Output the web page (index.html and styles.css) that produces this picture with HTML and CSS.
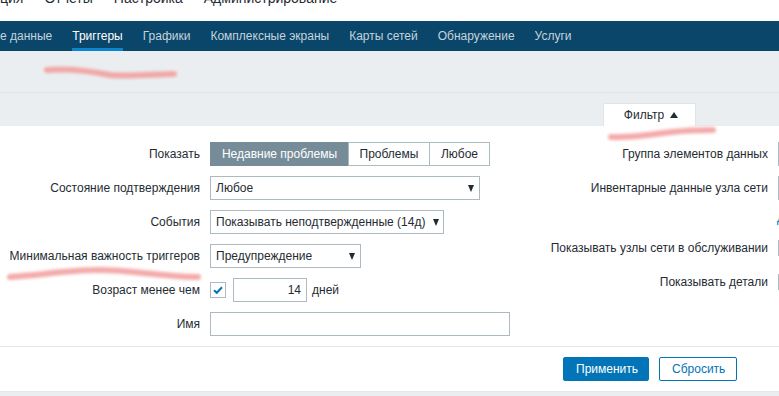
FILE: index.html
```html
<!DOCTYPE html>
<html lang="ru">
<head>
<meta charset="utf-8">
<title>Триггеры</title>
<link rel="stylesheet" href="styles.css">
</head>
<body>
<div class="page">
  <header class="top-menu">
    <ul class="top-menu-list">
      <li>ция</li>
      <li>Отчеты</li>
      <li>Настройка</li>
      <li>Администрирование</li>
    </ul>
  </header>

  <nav class="sub-nav">
    <a class="sub-nav-item">е данные</a>
    <a class="sub-nav-item active">Триггеры</a>
    <a class="sub-nav-item">Графики</a>
    <a class="sub-nav-item">Комплексные экраны</a>
    <a class="sub-nav-item">Карты сетей</a>
    <a class="sub-nav-item">Обнаружение</a>
    <a class="sub-nav-item">Услуги</a>
  </nav>

  <div class="header-area"></div>

  <div class="filter-tabs">
    <div class="filter-tab">Фильтр <span class="tri-up"></span></div>
  </div>

  <div class="filter-body">
    <div class="col-left">
      <label class="form-label">Показать</label>
      <div class="radio-group">
        <span class="radio-btn selected w-recent">Недавние проблемы</span>
        <span class="radio-btn w-problems">Проблемы</span>
        <span class="radio-btn w-any">Любое</span>
      </div>

      <label class="form-label">Состояние подтверждения</label>
      <div class="select w-ack">Любое<span class="tri-down"></span></div>

      <label class="form-label">События</label>
      <div class="select w-events">Показывать неподтвержденные (14д)<span class="tri-down"></span></div>

      <label class="form-label">Минимальная важность триггеров</label>
      <div class="select w-sev">Предупреждение<span class="tri-down"></span></div>

      <label class="form-label">Возраст менее чем</label>
      <div class="age-field">
        <span class="checkbox checked">
          <svg class="check" viewBox="0 0 12 12" width="12" height="12"><path d="M2 6.2 L4.8 8.8 L10 3.2" fill="none" stroke="#0275b8" stroke-width="2"/></svg>
        </span>
        <span class="text-input w-age">14</span>
        <span class="unit">дней</span>
      </div>

      <label class="form-label">Имя</label>
      <span class="text-input w-name"></span>
    </div>

    <div class="col-right">
      <div class="r-row r1">
        <label class="form-label">Группа элементов данных</label>
        <span class="multiselect"></span>
      </div>
      <div class="r-row r2">
        <label class="form-label">Инвентарные данные узла сети</label>
        <span class="multiselect"></span>
      </div>
      <div class="r-row r3">
        <span></span>
        <a class="link">Добавить</a>
      </div>
      <div class="r-row r4">
        <label class="form-label">Показывать узлы сети в обслуживании</label>
        <span class="checkbox"></span>
      </div>
      <div class="r-row r5">
        <label class="form-label">Показывать детали</label>
        <span class="checkbox"></span>
      </div>
    </div>
  </div>

  <div class="filter-footer">
    <button class="btn btn-primary" type="button">Применить</button>
    <button class="btn btn-alt" type="button">Сбросить</button>
  </div>

  <div class="bottom-band"></div>

  <svg class="scribbles" width="779" height="396" viewBox="0 0 779 396">
    <defs>
      <filter id="soft" x="-10%" y="-300%" width="120%" height="700%">
        <feGaussianBlur stdDeviation="1.6"/>
      </filter>
    </defs>
    <g fill="none" stroke="#f29b9b" stroke-width="6" stroke-linecap="round" opacity="0.85" filter="url(#soft)">
      <path d="M47 70 C 70 68, 90 71, 110 75 C 130 77, 155 74, 174 74"/>
      <path d="M611 137 C 630 138, 650 135, 672 132 C 690 130, 700 130, 713 130"/>
      <path d="M10 277 C 40 275, 70 270, 95 270 C 130 269, 150 276, 198 277"/>
    </g>
  </svg>
</div>
</body>
</html>
```

FILE: styles.css
```css
html, body {
  margin: 0;
  padding: 0;
  overflow: hidden;
}

body {
  font-family: "Liberation Sans", Arial, sans-serif;
  font-size: 12px;
  color: #1f2c33;
  background: #ffffff;
}

.page {
  position: relative;
  width: 779px;
  height: 396px;
  overflow: hidden;
}

/* top main menu (cropped) */
.top-menu {
  height: 21px;
  overflow: hidden;
  background: #ffffff;
}

.top-menu-list {
  list-style: none;
  margin: -10px 0 0 0;
  padding: 0;
  display: flex;
  gap: 21px;
  font-size: 14px;
  line-height: 16px;
  color: #1f2c33;
  white-space: nowrap;
}

/* secondary nav */
.sub-nav {
  height: 30px;
  background: #0a466a;
  display: flex;
  gap: 20px;
  white-space: nowrap;
}

.sub-nav-item {
  display: block;
  line-height: 30px;
  height: 30px;
  box-sizing: border-box;
  color: #c4d3dd;
  font-size: 12px;
}

.sub-nav-item.active {
  color: #ffffff;
  box-shadow: inset 0 -3px 0 #0a85d0;
}

/* page header area */
.header-area {
  height: 41px;
  background: #ebeef0;
  border-bottom: 1px solid #dfe4e7;
}

.filter-tabs {
  height: 33px;
  box-sizing: border-box;
  background: #ebeef0;
  padding: 10px 0 0 603px;
}

.filter-tab {
  width: 93px;
  height: 23px;
  box-sizing: border-box;
  background: #ffffff;
  border: 1px solid #e1e5e8;
  border-bottom: none;
  display: flex;
  align-items: center;
  justify-content: center;
  gap: 6px;
  color: #1f2c33;
  padding-left: 3px;
}

.tri-up {
  display: inline-block;
  width: 0;
  height: 0;
  border-left: 4px solid transparent;
  border-right: 4px solid transparent;
  border-bottom: 6px solid #1f2c33;
}

/* filter body */
.filter-body {
  display: flex;
  height: 220px;
  box-sizing: border-box;
  padding-top: 16px;
  background: #ffffff;
}

.col-left {
  flex: 0 0 540px;
  display: grid;
  grid-template-columns: 200px auto;
  grid-auto-rows: 24px;
  column-gap: 10px;
  row-gap: 10px;
  align-items: center;
  align-content: start;
}

.form-label {
  justify-self: end;
  text-align: right;
  white-space: nowrap;
  color: #1f2c33;
}

.col-left > :not(.form-label) {
  justify-self: start;
}

.radio-group {
  display: flex;
  height: 24px;
}

.radio-btn {
  box-sizing: border-box;
  height: 24px;
  line-height: 22px;
  padding: 0;
  text-align: center;
  border: 1px solid #acbbc2;
  background: #ffffff;
  color: #1f2c33;
  white-space: nowrap;
}

.w-recent { width: 139px; }
.w-problems { width: 82px; }
.w-any { width: 61px; }

.radio-btn + .radio-btn {
  margin-left: -1px;
}

.radio-btn.selected {
  background: #768d99;
  border-color: #768d99;
  color: #ffffff;
}

.select {
  position: relative;
  box-sizing: border-box;
  height: 24px;
  line-height: 22px;
  padding-left: 5px;
  border: 1px solid #acbbc2;
  background: #ffffff;
  white-space: nowrap;
  display: flex;
  align-items: center;
  justify-content: space-between;
  padding-right: 5px;
}

.w-ack { width: 270px; }
.w-events { width: 234px; }
.w-sev { width: 151px; }

.tri-down {
  display: inline-block;
  width: 0;
  height: 0;
  border-left: 3.5px solid transparent;
  border-right: 3.5px solid transparent;
  border-top: 7px solid #1f2c33;
  margin-left: 8px;
}

.age-field {
  display: flex;
  align-items: center;
  height: 24px;
}

.checkbox {
  display: inline-flex;
  align-items: center;
  justify-content: center;
  box-sizing: border-box;
  width: 16px;
  height: 16px;
  border: 1px solid #acbbc2;
  background: #ffffff;
}

.age-field .checkbox {
  margin-right: 7px;
}

.text-input {
  display: block;
  box-sizing: border-box;
  height: 24px;
  line-height: 22px;
  border: 1px solid #acbbc2;
  background: #ffffff;
  padding: 0 5px;
}

.w-age {
  width: 74px;
  text-align: right;
}

.w-name {
  width: 300px;
}

.unit {
  margin-left: 5px;
}

/* right column */
.col-right {
  flex: 0 0 auto;
  display: flex;
  flex-direction: column;
}

.r-row {
  display: grid;
  grid-template-columns: 228px 300px;
  column-gap: 10px;
  align-items: center;
}

.r1 { height: 24px; }
.r2 { height: 24px; margin-top: 10px; }
.r3 { height: 16px; margin-top: 10px; }
.r4 { height: 16px; margin-top: 14px; }
.r5 { height: 16px; margin-top: 18px; }

.multiselect {
  display: block;
  box-sizing: border-box;
  height: 24px;
  width: 300px;
  border: 1px solid #acbbc2;
  background: #ffffff;
}

.link {
  color: #0275b8;
  margin-left: -1px;
}

/* footer */
.filter-footer {
  display: flex;
  gap: 10px;
  height: 45px;
  box-sizing: border-box;
  border-top: 1px solid #e3e7ea;
  padding: 10px 0 0 563px;
  background: #ffffff;
}

.btn {
  box-sizing: border-box;
  height: 24px;
  padding: 0 12px;
  font-family: "Liberation Sans", Arial, sans-serif;
  font-size: 12px;
  border-radius: 2px;
  border: 1px solid #0275b8;
  cursor: pointer;
}

.btn-primary {
  width: 86px;
  background: #0275b8;
  color: #ffffff;
}

.btn-alt {
  width: 78px;
  background: #ffffff;
  color: #0275b8;
}

.bottom-band {
  height: 5px;
  background: #ebeef0;
  border-top: 1px solid #e3e7ea;
}

.scribbles {
  position: absolute;
  left: 0;
  top: 0;
  pointer-events: none;
}
```
